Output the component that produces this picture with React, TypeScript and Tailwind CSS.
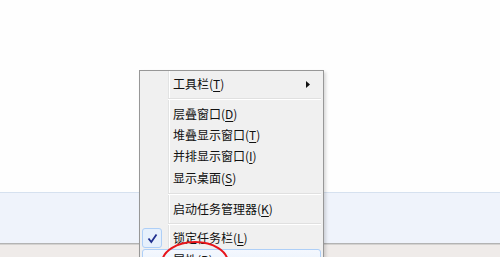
import React from "react";

const font = { fontFamily: '"Microsoft YaHei","Noto Sans CJK SC","Noto Sans",sans-serif' };

function Label({ text, acc }: { text: string; acc: string }) {
  return (
    <span className="text-[12px] leading-none text-[#111]" style={font}>
      {text}(<span className="underline underline-offset-2">{acc}</span>)
    </span>
  );
}

function Item({ text, acc, h = "h-[22px]", children }: { text: string; acc: string; h?: string; children?: React.ReactNode }) {
  return (
    <div className={`relative flex items-center ${h} pl-[31px] pr-2`}>
      <Label text={text} acc={acc} />
      {children}
    </div>
  );
}

function Sep({ h }: { h: string }) {
  return (
    <div className={`flex flex-col justify-center ${h} pl-[26px]`}>
      <div className="h-px bg-[#e0e0e0]" />
      <div className="h-px bg-white" />
    </div>
  );
}

export default function App() {
  return (
    <div className="relative h-[257px] w-[500px] overflow-hidden bg-white">
      <div className="flex h-full flex-col">
        <div className="h-[192px] bg-[#fefefe]" />
        <div className="h-px bg-[#d6e1ef]" />
        <div className="h-[50px] bg-[#eff3fb]" />
        <div className="h-px bg-[#b3b3b3]" />
        <div className="h-px bg-[#d4d2d0]" />
        <div className="flex-1 bg-[#efebe9]" />
      </div>

      <div className="absolute left-[139px] top-[70px] w-[185px] border border-[#979797] bg-[#f0f0f0] p-[2px] shadow-[2px_2px_3px_rgba(0,0,0,0.15)]">
        <div className="absolute bottom-0 left-[28px] top-0 w-px bg-[#e2e3e3]" />
        <div className="absolute bottom-0 left-[29px] top-0 w-px bg-white" />
        <div className="relative">
          <Item text="工具栏" acc="T">
            <svg className="absolute right-[11px] top-[8px]" width="4" height="7" viewBox="0 0 4 7">
              <path d="M0 0 L4 3.5 L0 7 Z" fill="#111" />
            </svg>
          </Item>
          <Sep h="h-[8px]" />
          <Item text="层叠窗口" acc="D" h="h-[21px]" />
          <Item text="堆叠显示窗口" acc="T" h="h-[21px]" />
          <Item text="并排显示窗口" acc="I" />
          <Item text="显示桌面" acc="S" />
          <Sep h="h-[9px]" />
          <Item text="启动任务管理器" acc="K" />
          <Sep h="h-[7px]" />
          <Item text="锁定任务栏" acc="L">
            <div className="absolute left-0 top-[1px] flex h-[20px] w-[20px] items-center justify-center rounded-[3px] border border-[#aecff7] bg-[#e6f0fc]">
              <svg width="11" height="11" viewBox="0 0 11 11">
                <path d="M1.5 5.5 L4.3 9 L9.5 1.5" fill="none" stroke="#1f2f8f" strokeWidth="1.8" />
              </svg>
            </div>
          </Item>
          <div className="relative flex h-[22px] items-center rounded-[3px] border border-[#aecff7] bg-gradient-to-b from-[#f4f8fe] to-[#e6effb] pl-[30px]">
            <Label text="属性" acc="R" />
          </div>
        </div>
      </div>

      <svg className="absolute left-0 top-0" width="500" height="257" viewBox="0 0 500 257">
        <ellipse cx="195" cy="263" rx="33" ry="21" fill="none" stroke="#e8141a" strokeWidth="2" />
      </svg>
    </div>
  );
}
